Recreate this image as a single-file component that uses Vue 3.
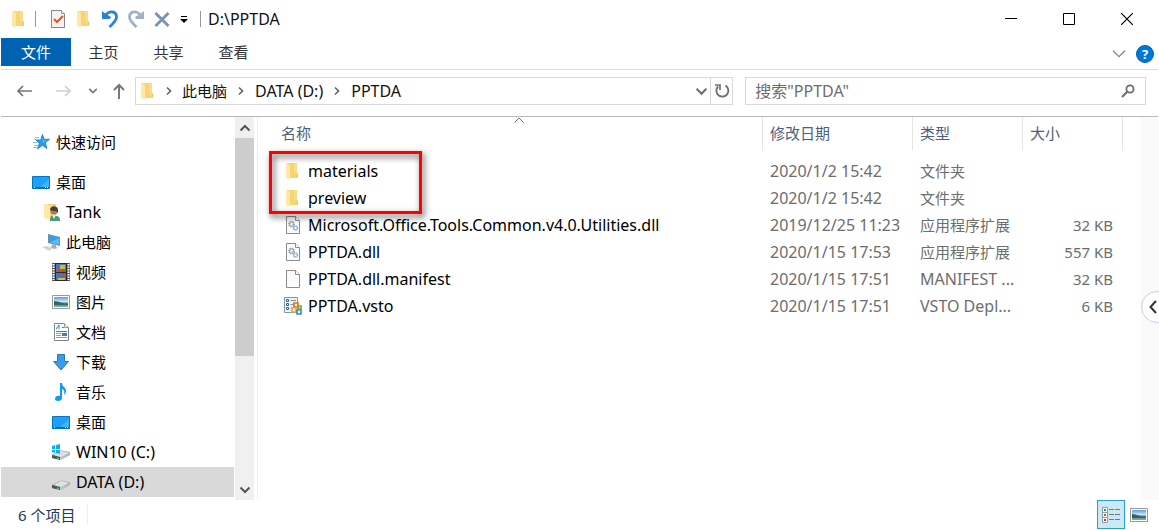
<script setup>
import { ref } from 'vue'

const tabs = ['主页', '共享', '查看']
const crumbs = ['此电脑', 'DATA (D:)', 'PPTDA']
const query = ref('')

const isLatin = (text) => /^[\x20-\x7e]+$/.test(text)

const tree = [
  { name: '快速访问', icon: 'star', level: 0, spaced: true },
  { name: '桌面', icon: 'desktop', level: 0 },
  { name: 'Tank', icon: 'user', level: 1 },
  { name: '此电脑', icon: 'pc', level: 1 },
  { name: '视频', icon: 'video', level: 2 },
  { name: '图片', icon: 'picture', level: 2 },
  { name: '文档', icon: 'document', level: 2 },
  { name: '下载', icon: 'download', level: 2 },
  { name: '音乐', icon: 'music', level: 2 },
  { name: '桌面', icon: 'desktop', level: 2 },
  { name: 'WIN10 (C:)', icon: 'windrive', level: 2 },
  { name: 'DATA (D:)', icon: 'drive', level: 2, selected: true }
]

const files = [
  { name: 'materials', icon: 'folder', date: '2020/1/2 15:42', type: '文件夹', size: '' },
  { name: 'preview', icon: 'folder', date: '2020/1/2 15:42', type: '文件夹', size: '' },
  { name: 'Microsoft.Office.Tools.Common.v4.0.Utilities.dll', icon: 'dll', date: '2019/12/25 11:23', type: '应用程序扩展', size: '32 KB' },
  { name: 'PPTDA.dll', icon: 'dll', date: '2020/1/15 17:53', type: '应用程序扩展', size: '557 KB' },
  { name: 'PPTDA.dll.manifest', icon: 'file', date: '2020/1/15 17:51', type: 'MANIFEST ...', size: '32 KB' },
  { name: 'PPTDA.vsto', icon: 'vsto', date: '2020/1/15 17:51', type: 'VSTO Depl...', size: '6 KB' }
]
</script>

<template>
  <div class="explorer">
    <svg class="defs" aria-hidden="true">
      <linearGradient id="gSky" x1="0" y1="0" x2="0" y2="1"><stop offset="0" stop-color="#5b9be6" /><stop offset=".5" stop-color="#d6ebf8" /><stop offset=".6" stop-color="#4e7d72" /><stop offset="1" stop-color="#76b2c0" /></linearGradient>
      <linearGradient id="gDrive" x1="0" x2="1"><stop offset="0" stop-color="#8a8c8c" /><stop offset=".5" stop-color="#c2c4c5" /><stop offset="1" stop-color="#aeb0b1" /></linearGradient>
      <symbol id="folder" viewBox="0 0 18 18">
        <path d="M3 1h10v10l1 1v4H3z" fill="#f7d476" /><path d="M10 1h3v10h-3z" fill="#fbdd88" />
        <path d="M2 1h1l3 2v14.500l-4-1.500z" fill="#ffe8a8" /><path d="M13 11.500h1V16h-1z" fill="#f0c862" />
      </symbol>
      <symbol id="star" viewBox="0 0 18 18">
        <path d="M10.500 1.500l1.700 4.800H17.500l-4.200 3.500 1.700 5.700-4.500-3.200L5.500 16l1.800-5.600L4 7h4.700z" fill="#2b9be6" stroke="#1679c0" stroke-width=".8" />
        <path d="M10.500 4l1 3.500h3L11 10z" fill="#58bcf5" />
        <path d="M3 4.500h4M2 6.500h4M1 9.500h4M2 12.500h4M1 14.500h4" stroke="#7fc4f0" stroke-width="1" />
      </symbol>
      <symbol id="desktop" viewBox="0 0 18 18">
        <path d="M.5 3.500h17v12H.5z" fill="#1ca1fb" stroke="#0775bd" /><path d="M8 14L17 6v8z" fill="#43b2ff" />
        <path d="M1 14.500h16" stroke="#075f9d" /><path d="M2 14.500h1M13 14.500h1M15 14.500h1" stroke="#fff" />
      </symbol>
      <symbol id="user" viewBox="0 0 18 18">
        <path d="M5 1h9v14H5z" fill="#f7d476" /><path d="M2 1h2l4 2v14l-6-2z" fill="#ffe8a8" />
        <path d="M8 18c0-4 1-6 4-6l2 1c3 0 4 2 4 4v1z" fill="#4b9a78" /><path d="M10 12l2 4 2-4z" fill="#e8eee8" />
        <circle cx="12" cy="8" r="3.600" fill="#b07a57" /><path d="M8 7c0-5 8-5 8 0v3l-2-2c-2 0-4 0-6-1z" fill="#4a3e37" />
      </symbol>
      <symbol id="pc" viewBox="0 0 18 18">
        <path d="M6 1l12 3v9L6 10z" fill="#6f8da3" /><path d="M7 2.200l10.300 2.600v7L7 9.300z" fill="#2ea0ef" /><path d="M8 9.500L17.300 5v6.800z" fill="#5bbcf7" />
        <path d="M10 11l4 1v2l2 1-4 1-4-2 2-1z" fill="#a6afb7" /><path d="M0 14l5-1 6 3-5 2z" fill="#d8e0e6" /><path d="M2 14l6 2.500M4 13.500l5.500 2.500" stroke="#b7c4cd" stroke-width=".6" />
      </symbol>
      <symbol id="video" viewBox="0 0 18 18">
        <path d="M0 0h18v18H0z" fill="#555" /><path d="M1.500 1v16M16.500 1v16" stroke="#fff" stroke-width="2" stroke-dasharray="1.500 1" />
        <path d="M3 0h12v18H3z" fill="#252a38" /><path d="M4 1h10v8H4zM4 10h10v7H4z" fill="#4277c6" />
        <path d="M8 2h5v5H8z" fill="#dab52c" /><path d="M4 6h6v3H4z" fill="#d34832" /><path d="M10 6h4v3h-4z" fill="#438846" /><path d="M10 10h3v2h-3z" fill="#e23c31" /><path d="M6 15h7v2H6z" fill="#dfbd35" />
      </symbol>
      <symbol id="picture" viewBox="0 0 18 18">
        <path d="M.5 2.500h17v13H.5z" fill="#fff" stroke="#999" /><path d="M2 4h14v10H2z" fill="url(#gSky)" /><path d="M2 8c5 0 8 3 14 3v1H2z" fill="#34665a" />
      </symbol>
      <symbol id="document" viewBox="0 0 18 18">
        <path d="M2.500.5h10l4 4v13h-14z" fill="#fff" stroke="#858585" /><path d="M12.500.5v4h4" fill="#eee" stroke="#999" />
        <path d="M4 6l3-4v4M10 4.500h2M4 8.500h11" stroke="#168ddd" fill="none" /><path d="M4 10.500h5M4 12.500h5M4 14.500h11" stroke="#999" /><path d="M10 10h5v3h-5z" fill="#3683ae" />
      </symbol>
      <symbol id="download" viewBox="0 0 18 18"><path d="M5.500 1.500h7v7h4L9 17 1.500 8.500h4z" fill="#3b9be9" stroke="#2878bd" /></symbol>
      <symbol id="music" viewBox="0 0 18 18"><path d="M8 0h2c0 4 4 4 4 8 0 2-1 3-2 4 1-4 0-5-2-6v9c0 2-2 3-4 3s-3-1-3-2c0-2 2-4 5-3z" fill="#0d99f5" /></symbol>
      <symbol id="drive" viewBox="0 0 18 18">
        <path d="M0 12l9-5 9 2v3l-9 5-9-2z" fill="url(#gDrive)" /><path d="M1 12l8-4 8 2-8 4z" fill="#dddfe0" />
        <path d="M0 12l8 2v3l-8-2z" fill="#515655" /><path d="M5 15l2 1" stroke="#38df50" stroke-width="1.500" />
      </symbol>
      <symbol id="windrive" viewBox="0 0 18 18">
        <use href="#drive" /><path d="M0 3l3-1v4H0zM4 2l4-1v5H4zM0 7h3v3l-3-1zM4 7h4v4l-4-1z" fill="#09b3ea" />
      </symbol>
      <symbol id="file" viewBox="0 0 18 18"><path d="M2.500.5h9l4 4v13h-13z" fill="#fbfbfb" stroke="#8b8b8b" /><path d="M11.500.5v4h4" fill="#fff" stroke="#8b8b8b" /></symbol>
      <symbol id="dll" viewBox="0 0 18 18">
        <use href="#file" /><circle cx="7.500" cy="8" r="2.500" fill="none" stroke="#8c949b" stroke-width="1.700" stroke-dasharray="1.300 .6" /><circle cx="7.500" cy="8" r="1.500" fill="#fff" stroke="#9aa4ac" stroke-width=".7" />
        <circle cx="11.500" cy="12" r="1.900" fill="#fff" stroke="#6e9fc6" stroke-width="1.500" stroke-dasharray="1.200 .5" />
      </symbol>
      <symbol id="vsto" viewBox="0 0 18 18">
        <path d="M.5.500h13v15H.5z" fill="#edf4fa" stroke="#8297aa" /><path d="M2.500 2.500h2v2h-2zM2.500 6.500h2v2h-2zM2.500 10.500h2v2h-2z" fill="#fff" stroke="#425e7a" /><path d="M6.500 3.500H12M6.500 7.500H9M6.500 11.500H8" stroke="#7895ad" />
        <g fill="#fff" stroke-width="1.700"><path d="M10 6h4v4h-4z" stroke="#eb6b1d" /><path d="M8 11h4v4H8z" stroke="#f4ac20" /><path d="M13 13h4v4h-4z" stroke="#3f8bd0" /><path d="M14 9h3v3h-3z" stroke="#72aa35" /></g>
      </symbol>
      <symbol id="check" viewBox="0 0 18 18"><path d="M2.500.5h10l3 3v14h-13z" fill="#f3f3f3" stroke="#858585" /><path d="M12.500.5v3h3" fill="#fff" stroke="#999" /><path d="M5 9l3 3 6-6" fill="none" stroke="#e9541d" stroke-width="2" /></symbol>
      <symbol id="undo" viewBox="0 0 18 18"><path d="M1 1l2.500 2L10 7l-1 2H1z" fill="#2d83cf" /><path d="M4 6C8 0 15.500 1 15.500 7c0 4-3.500 6-7 10" fill="none" stroke="#2d83cf" stroke-width="2.800" /></symbol>
      <symbol id="redo" viewBox="0 0 18 18"><path d="M17 1l-2.500 2L8 7l1 2h8z" fill="#a3b1c8" /><path d="M14 6C10 0 2.500 1 2.500 7c0 4 3.500 6 7 10" fill="none" stroke="#a3b1c8" stroke-width="2.800" /></symbol>
      <symbol id="cross" viewBox="0 0 18 18"><path d="M2.500 3l13 13M15.500 3l-13 13" stroke="#7d93b6" stroke-width="3" /></symbol>
      <symbol id="chev-right" viewBox="0 0 10 10"><path d="M3 1.500L6.500 5 3 8.500" fill="none" stroke="currentColor" stroke-width="1.700" /></symbol>
      <symbol id="chev-down" viewBox="0 0 12 12"><path d="M1.500 3.500L6 8l4.500-4.500" fill="none" stroke="currentColor" stroke-width="var(--stroke, 2)" /></symbol>
      <symbol id="chev-up" viewBox="0 0 12 12"><path d="M1.500 8.500L6 4l4.500 4.500" fill="none" stroke="currentColor" stroke-width="var(--stroke, 2)" /></symbol>
      <symbol id="arrow-left" viewBox="0 0 18 18"><path d="M16 9H2M7 4L2 9l5 5" fill="none" stroke="currentColor" stroke-width="1.700" /></symbol>
      <symbol id="arrow-right" viewBox="0 0 18 18"><path d="M2 9h14M11 4l5 5-5 5" fill="none" stroke="currentColor" stroke-width="1.700" /></symbol>
    </svg>

    <header class="titlebar">
      <svg class="icon"><use href="#folder" /></svg>
      <span class="rule"></span>
      <div class="quick">
        <button aria-label="属性"><svg class="icon"><use href="#check" /></svg></button>
        <button aria-label="新建文件夹"><svg class="icon"><use href="#folder" /></svg></button>
        <button aria-label="撤消"><svg class="icon"><use href="#undo" /></svg></button>
        <button aria-label="恢复"><svg class="icon"><use href="#redo" /></svg></button>
        <button aria-label="删除"><svg class="icon"><use href="#cross" /></svg></button>
      </div>
      <button class="customize" aria-label="自定义快速访问工具栏"><svg width="8" height="8" viewBox="0 0 8 8"><path d="M1 1.500h6" stroke="#000" /><path d="M0 4h8L4 8z" /></svg></button>
      <span class="rule"></span>
      <h1 class="latin">D:\PPTDA</h1>
      <div class="window-buttons">
        <button aria-label="最小化"><svg width="12" height="12"><path d="M0 5.500h12" stroke="#000" /></svg></button>
        <button aria-label="最大化"><svg width="12" height="12"><path d="M.5.500h11v11H.5z" fill="none" stroke="#000" /></svg></button>
        <button aria-label="关闭"><svg width="12" height="12"><path d="M0 0l12 12M12 0L0 12" stroke="#000" stroke-width="1.200" /></svg></button>
      </div>
    </header>

    <nav class="ribbon">
      <button class="tab file-tab">文件</button>
      <button v-for="tab in tabs" :key="tab" class="tab">{{ tab }}</button>
      <button class="expand" aria-label="展开功能区"><svg width="16" height="16"><use href="#chev-down" /></svg></button>
      <button class="help" aria-label="帮助">?</button>
    </nav>

    <div class="navbar">
      <div class="history">
        <button class="nav" aria-label="返回"><svg class="icon"><use href="#arrow-left" /></svg></button>
        <button class="nav forward" aria-label="前进" disabled><svg class="icon"><use href="#arrow-right" /></svg></button>
        <button class="recent" aria-label="最近浏览的位置"><svg width="10" height="10"><use href="#chev-down" /></svg></button>
        <button class="up" aria-label="上移"><svg width="16" height="18" viewBox="0 0 16 18"><path d="M8 17V3M3 8l5-5 5 5" fill="none" stroke="#777" stroke-width="2" /></svg></button>
      </div>
      <div class="address">
        <svg class="icon"><use href="#folder" /></svg>
        <template v-for="crumb in crumbs" :key="crumb">
          <svg class="crumb-arrow" width="10" height="10"><use href="#chev-right" /></svg>
          <a href="#" :class="{ latin: isLatin(crumb) }">{{ crumb }}</a>
        </template>
        <button class="address-drop" aria-label="以前的位置"><svg width="13" height="13"><use href="#chev-down" /></svg></button>
        <button class="refresh" aria-label="刷新"><svg width="16" height="16" viewBox="0 0 16 16"><path d="M11.500 2.500A6 6 0 1 1 4 3.500" fill="none" stroke="#707070" stroke-width="1.900" /><path d="M1 2h5v5" fill="none" stroke="#707070" stroke-width="1.700" /></svg></button>
      </div>
      <div class="search">
        <input v-model="query" type="text" aria-label="搜索" placeholder="搜索&quot;PPTDA&quot;" />
        <svg width="14" height="14" viewBox="0 0 14 14"><circle cx="9" cy="5" r="3.600" fill="none" stroke="#6d6d6d" stroke-width="1.800" /><path d="M6.500 7.500L1 13" stroke="#6d6d6d" stroke-width="2.200" /></svg>
      </div>
    </div>

    <main class="body">
      <ul class="tree">
        <li v-for="(item, i) in tree" :key="i" :class="['level-' + item.level, { spaced: item.spaced, selected: item.selected, latin: isLatin(item.name) }]">
          <a href="#"><svg class="icon"><use :href="'#' + item.icon" /></svg>{{ item.name }}</a>
        </li>
      </ul>
      <div class="scrollbar">
        <button aria-label="向上滚动"><svg width="12" height="12"><use href="#chev-up" /></svg></button>
        <div class="track"><div class="thumb"></div></div>
        <button aria-label="向下滚动"><svg width="12" height="12"><use href="#chev-down" /></svg></button>
      </div>
      <section class="files">
        <svg class="sort" width="12" height="12"><use href="#chev-up" /></svg>
        <table>
          <colgroup><col /><col class="c-date" /><col class="c-type" /><col class="c-size" /></colgroup>
          <thead>
            <tr><th><span class="first">名称</span></th><th><span>修改日期</span></th><th><span>类型</span></th><th><span>大小</span></th></tr>
          </thead>
          <tbody>
            <tr v-for="file in files" :key="file.name">
              <td class="name latin"><div><svg class="icon"><use :href="'#' + file.icon" /></svg>{{ file.name }}</div></td>
              <td class="latin">{{ file.date }}</td>
              <td :class="{ latin: isLatin(file.type) }">{{ file.type }}</td>
              <td class="size">{{ file.size }}</td>
            </tr>
          </tbody>
        </table>
        <div class="highlight"></div>
      </section>
      <aside class="side">
        <button aria-label="展开侧栏"><svg width="8" height="14" viewBox="0 0 8 14"><path d="M7 1L1.500 7 7 13" fill="none" stroke="#333" stroke-width="2" /></svg></button>
      </aside>
    </main>

    <footer class="status">
      <span class="count">6 个项目</span>
      <div class="views">
        <button class="active" aria-label="详细信息">
          <svg width="20" height="18" viewBox="0 0 20 18"><path d="M1.500 1.500h5v5h-5zM1.500 6.500h5v5h-5zM1.500 11.500h5v5h-5z" fill="#fff" stroke="#999" /><path d="M3 3h2v2H3z" fill="#268d98" /><path d="M3 8h2v2H3z" fill="#7a7135" /><path d="M3 13h2v2H3z" fill="#d33127" /><path d="M8 3.500h5M14 3.500h5M8 8.500h5M14 8.500h5M8 13.500h5M14 13.500h5" stroke="#777" /></svg>
        </button>
        <button aria-label="大缩略图"><svg class="icon"><use href="#picture" /></svg></button>
      </div>
    </footer>
  </div>
</template>

<style>
body { margin: 0; background: #fff; }
</style>

<style scoped>
.explorer { font-family: "Noto Sans", "Noto Sans CJK SC", sans-serif; font-size: 15px; line-height: 20px; color: #111; background: #fff; overflow: hidden; }
.explorer * { box-sizing: border-box; }
.explorer .latin { font-size: 16px; }
.defs { position: absolute; width: 0; height: 0; }
svg { display: block; flex: none; }
.icon { width: 18px; height: 18px; }
button { display: flex; align-items: center; justify-content: center; padding: 0; border: 0; background: none; font: inherit; color: inherit; }
a { color: inherit; text-decoration: none; }

.titlebar { display: flex; align-items: center; height: 38px; padding: 0 3px 0 10px; }
.rule { width: 1px; height: 16px; margin: 0 7px; background: #999; }
.quick { display: flex; gap: 8px; margin-left: 6px; }
.customize { width: 8px; margin: 0 5px 0 9px; }
h1 { margin: 0; font-weight: 400; }
.window-buttons { display: flex; margin-left: auto; }
.window-buttons button { width: 58px; height: 38px; }

.ribbon { display: flex; align-items: center; height: 32px; margin: 0 1px; padding-right: 4px; border-bottom: 1px solid #dadbdc; }
.tab { width: 65px; height: 28px; margin-bottom: 3px; color: #333; }
.file-tab { width: 70px; background: #0063b1; color: #fff; }
.expand { --stroke: 1; margin-left: auto; color: #888; }
.help { width: 18px; height: 18px; margin-left: 9px; border: 1px solid #0062b1; border-radius: 50%; background: #0078d7; color: #fff; font-size: 13px; font-weight: 700; line-height: 16px; }

.navbar { display: flex; align-items: center; gap: 12px; height: 47px; margin: 0 1px; padding: 0 12px 4px 15px; border-bottom: 1px solid #b9b9b9; }
.history { display: flex; align-items: center; width: 107px; color: #777; }
.forward { margin-left: 20px; color: #d0d0d0; }
.recent { margin-left: 16px; }
.up { margin-left: 13px; }
.address, .search { display: flex; align-items: center; height: 28px; border: 1px solid #d9d9d9; }
.address { flex: 25; padding-left: 3px; }
.crumb-arrow { margin: 0 9px; color: #666; }
.icon + .crumb-arrow { margin: 0 8px 0 7px; }
.address-drop { margin-left: auto; margin-right: 2px; color: #707070; }
.refresh { width: 22px; height: 26px; border-left: 1px solid #d9d9d9; }
.search { flex: 16; padding: 0 10px 0 9px; }
.search input { flex: 1; min-width: 0; padding: 0; border: 0; outline: 0; background: none; font: inherit; font-size: 16px; color: #333; }
.search input::placeholder { color: #6d6d6d; opacity: 1; }

.body { display: flex; margin-left: 1px; }
.tree { width: 234px; margin: 0; padding: 10px 0 3px; list-style: none; }
.tree li { width: 233px; }
.tree a { display: flex; align-items: center; gap: 6px; height: 30px; color: #000; }
.level-0 a { padding-left: 31px; }
.level-1 a { padding-left: 41px; }
.level-2 a { padding-left: 51px; }
.spaced { margin-bottom: 10px; }
.selected { background: #d9d9d9; }
.scrollbar { display: flex; flex-direction: column; width: 19px; background: #f0f0f0; color: #555; }
.scrollbar button { height: 21px; }
.track { flex: 1; }
.thumb { height: 64%; background: #cdcdcd; }
.files { position: relative; flex: 1; min-width: 0; margin-left: 3px; border-left: 1px solid #f0f0f0; }
.sort { --stroke: 1; position: absolute; top: -3px; left: calc(50% - 187px); color: #777; }
table { width: calc(100% - 18px); border-collapse: collapse; table-layout: fixed; }
.c-date { width: 150px; }
.c-type { width: 110px; }
.c-size { width: 100px; }
th { padding: 0 0 7px; font-weight: 400; text-align: left; color: #4c607a; }
th span { display: block; height: 33px; padding: 6px 7px 0; border-right: 1px solid #e5e5e5; }
th .first { padding-left: 23px; }
td { height: 27px; padding: 0 7px; color: #6d6d6d; white-space: nowrap; }
.name { padding-left: 26px; color: #000; }
.name div { display: flex; align-items: center; gap: 6px; }
.size { padding-right: 10px; text-align: right; }
.highlight { position: absolute; top: 34px; left: 11px; width: 153px; height: 63px; border: 3px solid #f00; filter: drop-shadow(2px 3px 3px rgba(0, 0, 0, .7)); pointer-events: none; }
.side { display: flex; align-items: center; width: 18px; padding-bottom: 3px; background: #fafafa; overflow: hidden; }
.side button { flex: none; width: 32px; height: 32px; border: 1px solid #c5d2e3; border-radius: 50%; background: #fff; justify-content: flex-start; padding-left: 7px; }

.status { display: flex; align-items: center; height: 29px; padding: 0 10px 0 18px; color: #1e395b; }
.count { padding-right: 12px; border-right: 1px solid #eee; }
.views { display: flex; align-items: center; gap: 3px; margin-left: auto; }
.views button { width: 21px; height: 29px; }
.views .active { width: 28px; border: 1px solid #26a0da; background: #cbe8f6; }
</style>
